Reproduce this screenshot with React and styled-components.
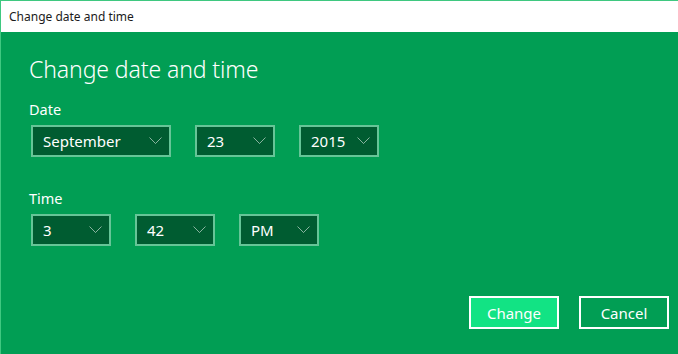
import React from "react";
import styled, { createGlobalStyle } from "styled-components";

const GlobalStyle = createGlobalStyle`
  html, body {
    margin: 0;
    padding: 0;
    background: #ffffff;
  }
  * {
    box-sizing: border-box;
  }
`;

const Chevron = () => (
  <svg width="13" height="8" viewBox="0 0 13 8">
    <polyline
      points="0.5,0.5 6.5,6.5 12.5,0.5"
      fill="none"
      stroke="rgba(255,255,255,0.6)"
      strokeWidth="0.9"
    />
  </svg>
);

const Select = ({ value, width }) => (
  <Dropdown width={width}>
    <DropdownText>{value}</DropdownText>
    <Chevron />
  </Dropdown>
);

const App = () => {
  return (
    <>
      <GlobalStyle />
      <Window>
        <TitleBar>Change date and time</TitleBar>
        <Body>
          <Heading>Change date and time</Heading>
          <Label>Date</Label>
          <Row>
            <Select value="September" width={140} />
            <Select value="23" width={80} />
            <Select value="2015" width={80} />
          </Row>
          <Label $spaced>Time</Label>
          <Row>
            <Select value="3" width={80} />
            <Select value="42" width={80} />
            <Select value="PM" width={80} />
          </Row>
          <Footer>
            <Button $primary>Change</Button>
            <Button>Cancel</Button>
          </Footer>
        </Body>
      </Window>
    </>
  );
};

const Window = styled.div`
  width: 678px;
  height: 354px;
  display: flex;
  flex-direction: column;
  border-top: 1px solid #3fc880;
  border-left: 1px solid #3fc880;
  font-family: "Noto Sans", "Open Sans", sans-serif;
  overflow: hidden;
`;

const TitleBar = styled.div`
  height: 31px;
  flex-shrink: 0;
  background: #ffffff;
  color: #1b1b1b;
  font-size: 12px;
  line-height: 31px;
  padding-left: 8px;
`;

const Body = styled.div`
  flex: 1;
  background: #019e54;
  padding: 0 9px 0 28px;
  display: flex;
  flex-direction: column;
`;

const Heading = styled.h1`
  margin: 22px 0 0 0;
  font-size: 23px;
  font-weight: 300;
  line-height: 30px;
  color: #ffffff;
  letter-spacing: -0.1px;
`;

const Label = styled.div`
  margin-top: ${(p) => (p.$spaced ? "31px" : "15px")};
  font-size: 14.5px;
  line-height: 20px;
  color: #ffffff;
`;

const Row = styled.div`
  display: flex;
  gap: 24px;
  margin-top: 6px;
  padding-left: 2px;
`;

const Dropdown = styled.div`
  width: ${(p) => p.width}px;
  height: 32px;
  border: 2px solid #66c597;
  background: #005c31;
  display: flex;
  align-items: center;
  justify-content: space-between;
  padding: 0 7px 0 10px;
`;

const DropdownText = styled.span`
  color: #ffffff;
  font-size: 15px;
  line-height: 20px;
`;

const Footer = styled.div`
  display: flex;
  justify-content: flex-end;
  gap: 20px;
  margin-top: 50px;
`;

const Button = styled.div`
  width: 90px;
  height: 33px;
  border: 2px solid #ffffff;
  background: ${(p) => (p.$primary ? "#12e384" : "transparent")};
  color: #ffffff;
  font-size: 15px;
  display: flex;
  align-items: center;
  justify-content: center;
`;

export default App;
